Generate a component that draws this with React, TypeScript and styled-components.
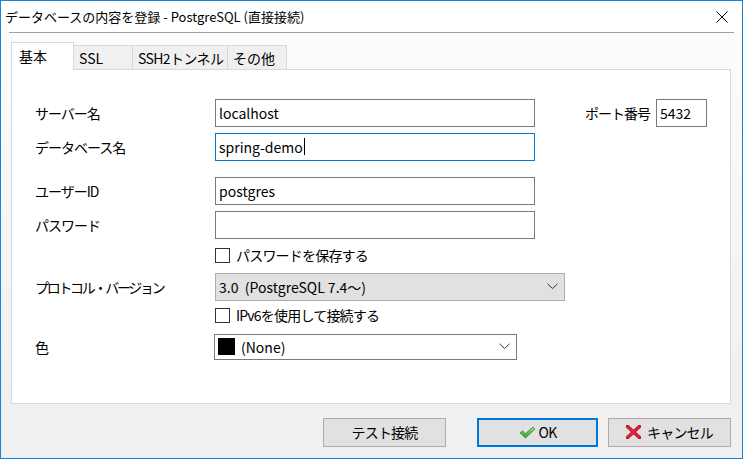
import React from "react";
import styled, { createGlobalStyle } from "styled-components";

const Global = createGlobalStyle`
  html, body { margin: 0; padding: 0; background: #fff; }
  body { font-family: "Noto Sans CJK JP", "Noto Sans", sans-serif; color: #000; }
  * { box-sizing: border-box; }
`;

const Window = styled.div`
  width: 743px;
  height: 459px;
  border: 1px solid #1883d7;
  display: flex;
  flex-direction: column;
  background: linear-gradient(#fcfcfc 10%, #f0f0f0 85%);
  overflow: hidden;
`;

const TitleBar = styled.div`
  height: 31px;
  background: #fff;
  display: flex;
  align-items: center;
  justify-content: space-between;
  padding: 0 14px 0 4px;
  font-size: 13px;
  flex: none;
`;

const Separator = styled.div`
  height: 1px;
  margin: 0 8px;
  background: #a0a0a0;
  flex: none;
`;

const Body = styled.div`
  flex: 1;
  display: flex;
  flex-direction: column;
  padding: 9px 11px 0 10px;
`;

const TabStrip = styled.div`
  display: flex;
  align-items: flex-end;
  height: 27px;
`;

const Tab = styled.div<{ $active?: boolean; $w: number; $ls?: number }>`
  width: ${(p) => p.$w}px;
  height: ${(p) => (p.$active ? 28 : 24)}px;
  margin-bottom: ${(p) => (p.$active ? -1 : 0)}px;
  background: ${(p) => (p.$active ? "#fff" : "#f0f0f0")};
  border: 1px solid #d9d9d9;
  border-bottom: none;
  margin-left: ${(p) => (p.$active ? 0 : -1)}px;
  position: relative;
  z-index: ${(p) => (p.$active ? 2 : 1)};
  display: flex;
  align-items: center;
  padding: ${(p) => (p.$active ? "0 0 1px 7px" : "0 0 0 5px")};
  font-size: 14px;
  letter-spacing: ${(p) => p.$ls ?? 0}px;
  white-space: nowrap;
  &:first-child { margin-left: 0; }
`;

const Panel = styled.div`
  height: 335px;
  background: #fff;
  border: 1px solid #d9d9d9;
  position: relative;
  z-index: 1;
  padding: 29px 0 0 23px;
  display: flex;
  flex-direction: column;
`;

const Row = styled.div<{ $mt?: number }>`
  display: flex;
  align-items: center;
  height: 28px;
  margin-top: ${(p) => p.$mt ?? 0}px;
`;

const Label = styled.div<{ $w?: number; $ml?: number; $ls?: number }>`
  width: ${(p) => p.$w ?? 180}px;
  margin-left: ${(p) => p.$ml ?? 0}px;
  font-size: 14px;
  letter-spacing: ${(p) => p.$ls ?? -1}px;
  white-space: nowrap;
  flex: none;
`;

const Input = styled.div<{ $w: number; $focus?: boolean }>`
  width: ${(p) => p.$w}px;
  height: 28px;
  border: 1px solid ${(p) => (p.$focus ? "#0078d7" : "#7a7a7a")};
  background: #fff;
  display: flex;
  align-items: center;
  padding: 0 0 1px 3px;
  font-size: 14px;
  flex: none;
`;

const Caret = styled.span`
  display: inline-block;
  width: 1px;
  height: 17px;
  background: #000;
  margin-left: 1px;
`;

const CheckRow = styled.div<{ $mt: number }>`
  display: flex;
  align-items: center;
  height: 16px;
  margin-top: ${(p) => p.$mt}px;
  padding-left: 180px;
  font-size: 14px;
  letter-spacing: -0.8px;
`;

const Box = styled.span`
  width: 15px;
  height: 15px;
  border: 1px solid #333;
  background: #fff;
  margin-right: 6px;
  flex: none;
`;

const Select = styled.div<{ $w: number; $gray?: boolean; $ml?: number }>`
  width: ${(p) => p.$w}px;
  margin-left: ${(p) => p.$ml ?? 0}px;
  height: ${(p) => (p.$gray ? 28 : 26)}px;
  border: 1px solid ${(p) => (p.$gray ? "#adadad" : "#7a7a7a")};
  background: ${(p) => (p.$gray ? "#e1e1e1" : "#fff")};
  display: flex;
  align-items: center;
  padding: 0 6px 1px 3px;
  font-size: 14px;
  white-space: pre;
  flex: none;
`;

const SelText = styled.span`
  flex: 1;
  display: flex;
  align-items: center;
`;

const Swatch = styled.span`
  width: 17px;
  height: 17px;
  background: #000;
  margin-right: 6px;
  flex: none;
`;

const Footer = styled.div`
  display: flex;
  justify-content: flex-end;
  padding: 14px 0 0 0;
`;

const Button = styled.div<{ $w: number; $ml: number; $default?: boolean; $gap?: number }>`
  width: ${(p) => p.$w}px;
  height: 29px;
  margin-left: ${(p) => p.$ml}px;
  background: #e1e1e1;
  border: ${(p) => (p.$default ? "2px solid #0078d7" : "1px solid #adadad")};
  display: flex;
  align-items: center;
  justify-content: center;
  font-size: 14px;
  letter-spacing: -0.8px;
  gap: ${(p) => p.$gap ?? 3}px;
  padding-bottom: 1px;
`;

const Chevron = () => (
  <svg width="11" height="7" viewBox="0 0 11 7">
    <path d="M0.5 0.8 L5.5 5.6 L10.5 0.8" fill="none" stroke="#333" strokeWidth="1" />
  </svg>
);

const CloseIcon = () => (
  <svg width="12" height="12" viewBox="0 0 12 12">
    <path d="M0.5 0.5 L11.5 11.5 M11.5 0.5 L0.5 11.5" stroke="#000" strokeWidth="1" />
  </svg>
);

const CheckIcon = () => (
  <svg width="17" height="13" viewBox="0 0 17 13">
    <defs>
      <linearGradient id="g" x1="0" y1="0" x2="0" y2="1">
        <stop offset="0" stopColor="#8fe08a" />
        <stop offset="1" stopColor="#2e9a2a" />
      </linearGradient>
    </defs>
    <path d="M1 7 L3.5 4.8 L6.5 7.6 L14 1 L16 3 L6.5 12 Z" fill="url(#g)" stroke="#3a8f35" strokeWidth="0.8" strokeLinejoin="round" />
  </svg>
);

const CrossIcon = () => (
  <svg width="15" height="14" viewBox="0 0 15 14">
    <path d="M1.5 1.5 L13.5 12.5 M13.5 1.5 L1.5 12.5" stroke="#c8102e" strokeWidth="3.6" strokeLinecap="round" />
    <path d="M2 2 L13 12 M13 2 L2 12" stroke="#ea4a5a" strokeWidth="1.2" strokeLinecap="round" opacity="0.6" />
  </svg>
);

export default function App() {
  return (
    <>
      <Global />
      <Window>
        <TitleBar>
          <span>データベースの内容を登録 - PostgreSQL (直接接続)</span>
          <CloseIcon />
        </TitleBar>
        <Separator />
        <Body>
          <TabStrip>
            <Tab $active $w={63}>基本</Tab>
            <Tab $w={60}>SSL</Tab>
            <Tab $w={96} $ls={-0.6}>SSH2トンネル</Tab>
            <Tab $w={60}>その他</Tab>
          </TabStrip>
          <Panel>
            <Row>
              <Label>サーバー名</Label>
              <Input $w={320}>localhost</Input>
              <Label $w={71} $ml={50}>ポート番号</Label>
              <Input $w={51}>5432</Input>
            </Row>
            <Row $mt={6}>
              <Label>データベース名</Label>
              <Input $w={320} $focus>
                spring-demo<Caret />
              </Input>
            </Row>
            <Row $mt={16}>
              <Label>ユーザーID</Label>
              <Input $w={320}>postgres</Input>
            </Row>
            <Row $mt={6}>
              <Label>パスワード</Label>
              <Input $w={320} />
            </Row>
            <CheckRow $mt={8}>
              <Box />
              パスワードを保存する
            </CheckRow>
            <Row $mt={10}>
              <Label $ls={-2.3}>プロトコル・バージョン</Label>
              <Select $w={350} $gray>
                <SelText>3.0  (PostgreSQL 7.4～)</SelText>
                <Chevron />
              </Select>
            </Row>
            <CheckRow $mt={6}>
              <Box />
              IPv6を使用して接続する
            </CheckRow>
            <Row $mt={10}>
              <Label>色</Label>
              <Select $w={303} $ml={-1}>
                <SelText>
                  <Swatch />
                  (None)
                </SelText>
                <Chevron />
              </Select>
            </Row>
          </Panel>
          <Footer>
            <Button $w={123} $ml={0}>テスト接続</Button>
            <Button $w={121} $ml={31} $default>
              <CheckIcon />
              OK
            </Button>
            <Button $w={123} $ml={10} $gap={6}>
              <CrossIcon />
              キャンセル
            </Button>
          </Footer>
        </Body>
      </Window>
    </>
  );
}
